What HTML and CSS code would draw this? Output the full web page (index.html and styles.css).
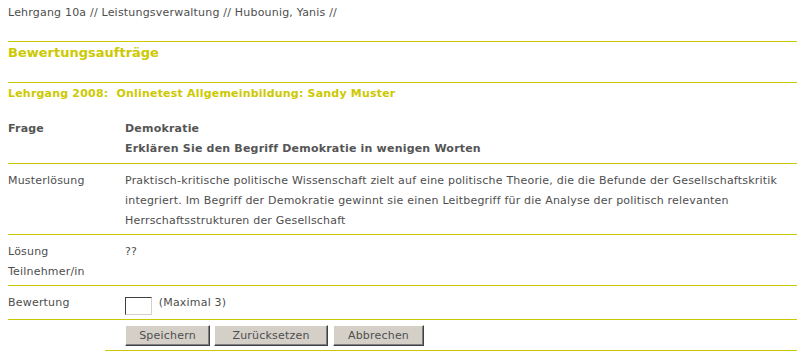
FILE: index.html
```html
<!DOCTYPE html>
<html lang="de">
<head>
<meta charset="utf-8">
<title>Bewertungsaufträge</title>
<link rel="stylesheet" href="styles.css">
</head>
<body>
<div class="page">
  <div class="crumb">Lehrgang 10a // Leistungsverwaltung // Hubounig, Yanis //</div>
  <h1 class="title">Bewertungsaufträge</h1>
  <h2 class="subtitle">Lehrgang 2008:&nbsp; Onlinetest Allgemeinbildung: Sandy Muster</h2>
  <table class="grid">
    <tr class="row row-first">
      <th class="label">Frage</th>
      <th class="value">Demokratie<br>Erklären Sie den Begriff Demokratie in wenigen Worten</th>
    </tr>
    <tr class="row">
      <td class="label">Musterlösung</td>
      <td class="value">Praktisch-kritische politische Wissenschaft zielt auf eine politische Theorie, die die Befunde der Gesellschaftskritik<br>integriert. Im Begriff der Demokratie gewinnt sie einen Leitbegriff für die Analyse der politisch relevanten<br>Herrschaftsstrukturen der Gesellschaft</td>
    </tr>
    <tr class="row">
      <td class="label">Lösung<br>Teilnehmer/in</td>
      <td class="value">??</td>
    </tr>
    <tr class="row row-input">
      <td class="label">Bewertung</td>
      <td class="value"><input class="score" type="text"> (Maximal 3)</td>
    </tr>
    <tr class="row-actions">
      <td class="blank"></td>
      <td class="actions">
        <button class="btn btn-save">Speichern</button>
        <button class="btn btn-reset">Zurücksetzen</button>
        <button class="btn btn-cancel">Abbrechen</button>
      </td>
    </tr>
  </table>
</div>
</body>
</html>
```
FILE: styles.css
```css
html, body {
  margin: 0;
  padding: 0;
  background: #ffffff;
}
body {
  font-family: "DejaVu Sans", Verdana, sans-serif;
  font-size: 11px;
  letter-spacing: 0.2px;
  color: #4e4e4e;
}
.page {
  width: 789px;
  padding: 0 4px 0 8px;
}
.crumb {
  height: 36px;
  padding-top: 5px;
  line-height: 16px;
  border-bottom: 1px solid #cdc900;
}
.title {
  margin: 0;
  height: 39px;
  padding-top: 1px;
  font-size: 13px;
  letter-spacing: 0;
  line-height: 20px;
  font-weight: bold;
  color: #cdc900;
  border-bottom: 1px solid #cdc900;
}
.subtitle {
  margin: 0;
  padding: 1px 0 8px;
  font-size: 11px;
  line-height: 20px;
  font-weight: bold;
  color: #cdc900;
}
.grid {
  width: 789px;
  border-collapse: collapse;
  border-spacing: 0;
}
.row > th,
.row > td {
  padding: 7px 0 3px;
  border-bottom: 1px solid #cdc900;
  line-height: 20px;
  text-align: left;
  vertical-align: top;
}
.row-first > th {
  padding-bottom: 4px;
  font-weight: bold;
  color: #555555;
}
.label {
  width: 97px;
}
.row > .value {
  padding-left: 20px;
}
.row-input > td {
  padding-bottom: 4px;
}
.score {
  box-sizing: border-box;
  width: 27px;
  height: 18px;
  margin: 0 3px 0 0;
  padding: 0;
  vertical-align: -4px;
  border: 1px solid;
  border-color: #404040 #d4d0c8 #d4d0c8 #404040;
  background: #fff;
}
.blank {
  padding: 0;
}
.actions {
  padding: 5px 0 4px 20px;
  border-bottom: 1px solid #cdc900;
  display: flex;
  gap: 4px;
}
.btn {
  box-sizing: border-box;
  height: 21px;
  margin: 0;
  padding: 0;
  font-family: "DejaVu Sans", Verdana, sans-serif;
  font-size: 11px;
  letter-spacing: 0.2px;
  color: #4e4e4e;
  background: #d4d0c8;
  border: 1px solid;
  border-color: #ffffff #404040 #404040 #ffffff;
  box-shadow: inset -1px -1px 0 #808080;
}
.btn-save { width: 85px; }
.btn-reset { width: 114px; }
.btn-cancel { width: 91px; margin-left: 1px; }
```
